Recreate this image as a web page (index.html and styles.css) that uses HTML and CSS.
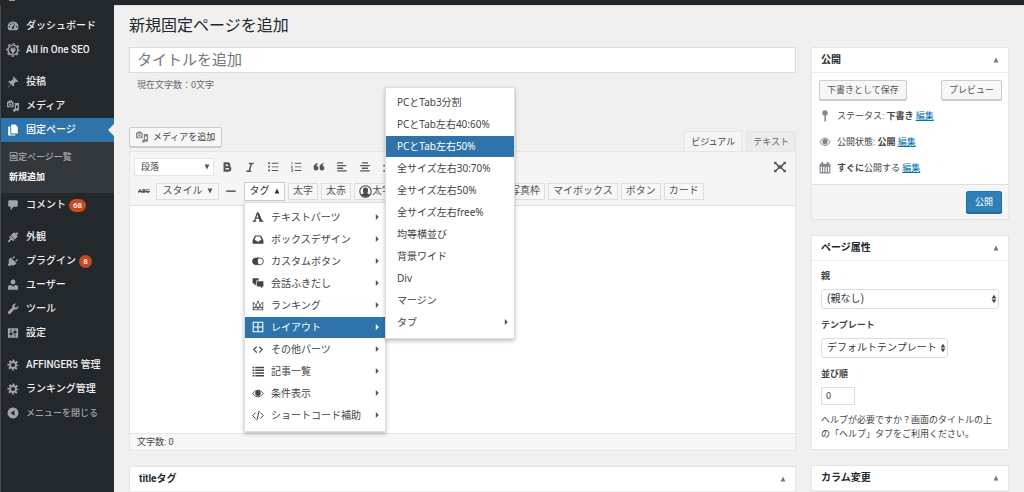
FILE: index.html
```html
<!DOCTYPE html>
<html lang="ja">
<head>
<meta charset="utf-8">
<title>新規固定ページを追加</title>
<link rel="stylesheet" href="styles.css">
</head>
<body>
<svg class="sprite" aria-hidden="true">
  <symbol id="gear" viewBox="0 0 20 20"><g fill="none" stroke="currentColor"><circle cx="10" cy="10" r="5" stroke-width="3"/><circle cx="10" cy="10" r="7.8" stroke-width="3" stroke-dasharray="3.1 3.03" stroke-dashoffset="1.5"/></g></symbol>
  <symbol id="media" viewBox="0 0 20 20"><path fill="currentColor" fill-rule="evenodd" d="M0 3h2l1-2h5l1 2h2v9H0zM5.500 4a3.500 3.500 0 1 0 .01 0zM5.500 5.500a2 2 0 1 1-.01 0zM13 5h7v11a2.500 2.500 0 1 1-2-2.500V9h-3v8a2.500 2.500 0 1 1-2-2.500z"/></symbol>
  <symbol id="up" viewBox="0 0 10 10"><path fill="currentColor" d="M5 1l4 8H1z"/></symbol>
  <symbol id="down" viewBox="0 0 10 10"><path fill="currentColor" d="M1 1h8L5 9z"/></symbol>
  <symbol id="right" viewBox="0 0 10 10"><path fill="currentColor" d="M3 0l5 5-5 5z"/></symbol>
  <symbol id="updown" viewBox="0 0 10 16"><path fill="currentColor" d="M5 1l4 6H1zM1 9h8l-4 6z"/></symbol>
</svg>
<header class="adminbar"><span class="logo-edge"></span></header>
<div class="shell">
  <nav class="sidebar">
    <ul class="menu">
      <li><a href="#"><svg viewBox="0 0 20 20"><path fill="currentColor" fill-rule="evenodd" d="M3 17A9 9 0 1 1 17 17zM9 4v2h2V4zM5 6v2h2V6zM3 10v2h2v-2zM15 10v2h2v-2zM14 5l-5 6.500a1.800 1.800 0 1 0 2.500 1z"/></svg>ダッシュボード</a></li>
      <li><a href="#"><svg class="large" viewBox="0 0 20 20"><g fill="none" stroke="currentColor"><circle cx="10" cy="10" r="7" stroke-width="2"/><circle cx="10" cy="10" r="8.800" stroke-width="2" stroke-dasharray="3.500 3.410" stroke-dashoffset="1.700"/></g><path fill="currentColor" d="M7.500 6h1.500v2h2V6h1.500v2h1v3l-2 2v2h-3v-2l-2-2V8h1z"/></svg>All in One SEO</a></li>
      <li class="group"><a href="#"><svg viewBox="0 0 20 20"><path fill="currentColor" d="M11 1l8 8-2 1-2-.5-3.500 3.500.5 3-1.500 1.500-4-4L2 19l-1 .5.5-1L6 13 2 9.500 3.500 8l3 .5L10.500 5 10 3z"/></svg>投稿</a></li>
      <li><a href="#"><svg><use href="#media"/></svg>メディア</a></li>
      <li class="current"><a href="#"><svg viewBox="0 0 20 20"><path fill="currentColor" d="M7 1h7l4 4v11H7zM2 4h3.500v13.500H14V19H2z"/></svg>固定ページ</a>
        <ul class="submenu"><li><a href="#">固定ページ一覧</a></li><li><a class="on" href="#">新規追加</a></li></ul>
      </li>
      <li><a href="#"><svg viewBox="0 0 20 20"><path fill="currentColor" d="M4 2h12q2 0 2 2v7q0 2-2 2h-5l-5 6v-6H4q-2 0-2-2V4q0-2 2-2z"/></svg>コメント<span class="count">68</span></a></li>
      <li class="group"><a href="#"><svg viewBox="0 0 20 20"><path fill="currentColor" d="M12 2l2 2 3-2 2 2-3 3 2 2-5 5-7-7zM5.500 8l7 7-2 1.500-3-2L3 19l-2-2 4.500-4.500-2-2.500z"/></svg>外観</a></li>
      <li><a href="#"><svg viewBox="0 0 20 20"><path fill="currentColor" d="M4 6l2-2 10 10-2 2q-4 2.500-7.500.5L4 19l-3-3 2.500-2.500Q1.500 10 4 6zM8.500 5L12 1.500l1.500 1.500L10 6.500zM13.500 10L17 6.500 18.500 8 15 11.500z"/></svg>プラグイン<span class="count">8</span></a></li>
      <li><a href="#"><svg viewBox="0 0 20 20"><circle cx="10" cy="5" r="4" fill="currentColor"/><path fill="currentColor" d="M1.500 18v-4q0-4 5-4L10 13l3.500-3q5 0 5 4v4z"/></svg>ユーザー</a></li>
      <li><a href="#"><svg viewBox="0 0 20 20"><path fill="currentColor" d="M15.500 1l-3 3 .5 3 3 .5 3-3q.5 3-1.500 5t-5 1L6 17.500q-1.500 1.500-3.500.5-2-2-.5-4L9 7.500q-1-3 1-5t5.500-1.500z"/></svg>ツール</a></li>
      <li><a href="#"><svg viewBox="0 0 20 20"><path fill="currentColor" fill-rule="evenodd" d="M1.500 2h17v16h-17zM6 4v6H4v3h2v3h1.500v-3h2v-3h-2V4zM12.500 4v3h-2v3h2v6H14v-6h2V7h-2V4z"/></svg>設定</a></li>
      <li class="group"><a href="#"><svg><use href="#gear"/></svg>AFFINGER5 管理</a></li>
      <li><a href="#"><svg><use href="#gear"/></svg>ランキング管理</a></li>
      <li><button class="collapse" type="button"><svg viewBox="0 0 20 20"><path fill="currentColor" fill-rule="evenodd" d="M10 1a9 9 0 1 0 .01 0zM12.500 5.500v9L6 10z"/></svg>メニューを閉じる</button></li>
    </ul>
  </nav>
  <main class="content">
    <h1>新規固定ページを追加</h1>
    <div class="columns">
      <div class="primary">
        <input class="title" type="text" placeholder="タイトルを追加" aria-label="タイトルを追加">
        <p class="letters">現在文字数：0文字</p>
        <div class="tools">
          <button class="button media" type="button"><svg><use href="#media"/></svg>メディアを追加</button>
          <div class="tabs"><button class="tab active" type="button">ビジュアル</button><button class="tab" type="button">テキスト</button></div>
        </div>
        <section class="editor">
          <div class="toolbar">
            <div class="bar">
              <span class="pick format"><select aria-label="書式"><option>段落</option></select><svg><use href="#down"/></svg></span>
              <div class="icons">
                <button type="button" aria-label="B"><svg viewBox="0 0 20 20"><path fill="none" stroke="currentColor" stroke-width="3.500" d="M6 4h5q3 0 3 3t-3 3H6zm0 6h6q3.500 0 3.500 3T12 16H6z"/></svg></button>
                <button type="button" aria-label="I"><svg viewBox="0 0 20 20"><path fill="none" stroke="currentColor" stroke-width="2.500" d="M8 4h8M4 17h8M12.500 4l-4 13"/></svg></button>
                <button type="button" aria-label="ul"><svg viewBox="0 0 20 20"><path fill="currentColor" d="M2 2h3v3H2zm0 6h3v3H2zm0 6h3v3H2zM8 3h11v1.500H8zm0 6h11v1.500H8zm0 6h11v1.500H8z"/></svg></button>
                <button type="button" aria-label="ol"><svg viewBox="0 0 20 20"><path fill="currentColor" d="M8 3h11v1.500H8zm0 6h11v1.500H8zm0 6h11v1.500H8z"/><path fill="none" stroke="currentColor" d="M2 2.500h1.500V6M2 8.500h2.500l-2.500 3h3M2 13.500h2.500v4H2m0-2h2.500"/></svg></button>
                <button type="button" aria-label="quote"><svg viewBox="0 0 20 20"><path fill="currentColor" d="M9.500 3Q6 4.500 6 8a4 4 0 1 1-5 4Q0 4.500 9.500 3zM19.500 3Q16 4.500 16 8a4 4 0 1 1-5 4Q10 4.500 19.500 3z"/></svg></button>
                <button type="button" aria-label="left"><svg viewBox="0 0 20 20"><path fill="currentColor" d="M2 2h10v2.200H2zm0 4.500h15v2.200H2zM2 11h10v2.200H2zm0 4.500h16v2.200H2z"/></svg></button>
                <button type="button" aria-label="center"><svg viewBox="0 0 20 20"><path fill="currentColor" d="M5 2h10v2.200H5zM2 6.500h16v2.200H2zM5 11h10v2.200H5zm-3 4.500h16v2.200H2z"/></svg></button>
                <button type="button" aria-label="right"><svg viewBox="0 0 20 20"><path fill="currentColor" d="M8 2h10v2.200H8zM2 6.500h16v2.200H2zM8 11h10v2.200H8zm-6 4.500h16v2.200H2z"/></svg></button>
              </div>
              <button class="full" type="button" aria-label="full"><svg viewBox="0 0 24 20"><path fill="currentColor" d="M2 1h5L5.500 2.500 10 7h4l4.500-4.500L17 1h5v5l-1.500-1.500L16 8.500v3l4.500 4L22 14v5h-5l1.500-1.500L14 13h-4l-4.500 4.500L7 19H2v-5l1.500 1.500 4.500-4v-3l-4.500-4L2 6z"/></svg></button>
            </div>
            <div class="bar second">
              <button class="strike" type="button"><s>ABC</s></button>
              <button class="tool style" type="button">スタイル<svg><use href="#down"/></svg></button>
              <button class="rule" type="button" aria-label="hr"><svg viewBox="0 0 20 20"><path fill="currentColor" d="M2 9h16v2.500H2z"/></svg></button>
              <div class="dropdown">
                <button class="tool open" type="button">タグ<svg><use href="#up"/></svg></button>
                <ul class="popup tags">
                  <li><button type="button"><svg viewBox="0 0 20 20"><path fill="none" stroke="currentColor" stroke-width="2" d="M1 17h6m5 0h7M4 17L9 3h1l6 14M6 12h8"/><path fill="none" stroke="currentColor" stroke-width="3.500" d="M10 4l5 13"/></svg>テキストパーツ<svg class="arrow"><use href="#right"/></svg></button></li>
                  <li><button type="button"><svg viewBox="0 0 20 20"><path fill="currentColor" fill-rule="evenodd" d="M5 4h10l4 8v6H1v-6zM6.500 6L4 12h3l1 2h4l1-2h3l-2.500-6z"/></svg>ボックスデザイン<svg class="arrow"><use href="#right"/></svg></button></li>
                  <li><button type="button"><svg viewBox="0 0 20 20"><rect x="1" y="5" width="18" height="11" rx="5.500" fill="none" stroke="currentColor" stroke-width="1.500"/><path fill="currentColor" d="M6.500 5H11q-2.500 5 0 11H6.500a5.500 5.500 0 0 1 0-11z"/></svg>カスタムボタン<svg class="arrow"><use href="#right"/></svg></button></li>
                  <li><button type="button"><svg viewBox="0 0 20 20"><path fill="currentColor" d="M1 2h10v4H7v6l-3 2v-3H1zM8 7h11v9h-2v3l-3-3H8z"/></svg>会話ふきだし<svg class="arrow"><use href="#right"/></svg></button></li>
                  <li><button type="button"><svg viewBox="0 0 20 20"><path fill="none" stroke="currentColor" stroke-width="1.300" d="M2 18V5l5 6 3-8 3 8 5-6v13zM2 18l5-7 3 6 3-6 5 7M2 14h16"/></svg>ランキング<svg class="arrow"><use href="#right"/></svg></button></li>
                  <li class="selected"><button type="button"><svg viewBox="0 0 20 20"><path fill="none" stroke="currentColor" stroke-width="1.800" d="M2 2h16v16H2zM10 2v16M2 10h16"/></svg>レイアウト<svg class="arrow"><use href="#right"/></svg></button>
                    <ul class="popup layouts">
                      <li><button type="button">PCとTab3分割</button></li>
                      <li><button type="button">PCとTab左右40:60%</button></li>
                      <li class="selected"><button type="button">PCとTab左右50%</button></li>
                      <li><button type="button">全サイズ左右30:70%</button></li>
                      <li><button type="button">全サイズ左右50%</button></li>
                      <li><button type="button">全サイズ左右free%</button></li>
                      <li><button type="button">均等横並び</button></li>
                      <li><button type="button">背景ワイド</button></li>
                      <li><button type="button">Div</button></li>
                      <li><button type="button">マージン</button></li>
                      <li><button type="button">タブ<svg class="arrow"><use href="#right"/></svg></button></li>
                    </ul>
                  </li>
                  <li><button type="button"><svg viewBox="0 0 20 20"><path fill="none" stroke="currentColor" stroke-width="2" d="M8 6l-5 5 5 5m4-10l5 5-5 5"/></svg>その他パーツ<svg class="arrow"><use href="#right"/></svg></button></li>
                  <li><button type="button"><svg viewBox="0 0 20 20"><path fill="currentColor" d="M1 3h3v2.500H1zm0 4.500h3V10H1zM1 12h3v2.500H1zm0 4.500h3V19H1zM5.500 3H20v2.500H5.500zm0 4.500H20V10H5.500zm0 4.500H20v2.500H5.500zm0 4.500H20V19H5.500z"/></svg>記事一覧<svg class="arrow"><use href="#right"/></svg></button></li>
                  <li><button type="button"><svg viewBox="0 0 20 20"><path fill="none" stroke="currentColor" stroke-width="1.500" d="M1 11q9-12 18 0-9 11-18 0z"/><circle cx="10" cy="10.500" r="4.500" fill="currentColor"/></svg>条件表示<svg class="arrow"><use href="#right"/></svg></button></li>
                  <li><button type="button"><svg viewBox="0 0 20 20"><path fill="none" stroke="currentColor" stroke-width="1.600" d="M6 6l-5 5 5 5m8-10l5 5-5 5M12 3L8 19"/></svg>ショートコード補助<svg class="arrow"><use href="#right"/></svg></button></li>
                </ul>
              </div>
              <button class="tool" type="button">太字</button>
              <button class="tool" type="button">太赤</button>
              <button class="tool face" type="button"><svg viewBox="0 0 20 20"><circle cx="10" cy="10" r="8.800" fill="none" stroke="currentColor" stroke-width="1.700"/><path fill="currentColor" d="M10 4q4 0 4 4 0 3-1.500 4.500l4.500 2q-7 8-14 0l4.500-2Q6 11 6 8q0-4 4-4z"/></svg>太字</button>
              <div class="extras">
                <button class="tool" type="button">写真枠</button>
                <button class="tool" type="button">マイボックス</button>
                <button class="tool" type="button">ボタン</button>
                <button class="tool" type="button">カード</button>
              </div>
            </div>
          </div>
          <div class="canvas" contenteditable="true" role="textbox" aria-label="本文"></div>
          <div class="status">文字数: 0</div>
        </section>
        <section class="box"><h2>titleタグ<svg><use href="#up"/></svg></h2></section>
      </div>
      <aside class="secondary">
        <section class="box">
          <h2>公開<svg><use href="#up"/></svg></h2>
          <div class="publish">
            <div class="actions"><button class="button" type="button">下書きとして保存</button><button class="button" type="button">プレビュー</button></div>
            <p><svg viewBox="0 0 20 20"><circle cx="10" cy="5" r="4.500" fill="currentColor"/><path fill="currentColor" d="M9 9h2.500v9L10 20l-1-2z"/></svg><span>ステータス: <b>下書き</b> <a href="#">編集</a></span></p>
            <p><svg viewBox="0 0 20 20"><path fill="none" stroke="currentColor" stroke-width="1.600" d="M1 10q9-13 18 0-9 12-18 0z"/><circle cx="10" cy="9.500" r="4.500" fill="currentColor"/></svg><span>公開状態: <b>公開</b> <a href="#">編集</a></span></p>
            <p><svg viewBox="0 0 20 20"><path fill="currentColor" fill-rule="evenodd" d="M1 3h3V0h3v3h6V0h3v3h3v16H1zM3 8v9h2V8zM7 8v9h2V8zM11 8v9h2V8zM15 8v9h2V8z"/></svg><span><b>すぐに</b>公開する <a href="#">編集</a></span></p>
          </div>
          <div class="major"><button class="primary-button" type="button">公開</button></div>
        </section>
        <section class="box">
          <h2>ページ属性<svg><use href="#up"/></svg></h2>
          <div class="attributes">
            <label for="parent">親</label>
            <span class="pick wide"><select id="parent"><option>(親なし)</option></select><svg><use href="#updown"/></svg></span>
            <label for="template">テンプレート</label>
            <span class="pick"><select id="template"><option>デフォルトテンプレート</option></select><svg><use href="#updown"/></svg></span>
            <label for="order">並び順</label>
            <input id="order" type="text" value="0">
            <p>ヘルプが必要ですか？画面のタイトルの上の「ヘルプ」タブをご利用ください。</p>
          </div>
        </section>
        <section class="box"><h2>カラム変更<svg><use href="#up"/></svg></h2></section>
      </aside>
    </div>
  </main>
</div>
</body>
</html>
```
FILE: styles.css
```css
* { box-sizing: border-box; }
body {
  margin: 0;
  height: 100vh;
  overflow: hidden;
  display: flex;
  flex-direction: column;
  background: #f0f0f0;
  color: #444;
  font: 9px/14px Roboto, "Noto Sans CJK JP", sans-serif;
}
ul { list-style: none; margin: 0; padding: 0; }
h1, h2, p { margin: 0; }
button, input, select { font: inherit; color: inherit; margin: 0; }
button { background: none; border: 0; padding: 0; white-space: nowrap; }
svg { flex: none; width: 12px; height: 12px; }
a { color: #0073aa; }
.sprite { position: absolute; width: 0; height: 0; }

.adminbar { height: 5px; flex: none; background: #23282d; padding-left: 9px; }
.logo-edge { display: block; width: 6px; height: 1px; background: #999; }
.shell { flex: 1; display: flex; min-height: 0; }

.sidebar {
  width: 114px;
  flex: none;
  padding-top: 9px;
  background: #23282d;
  border-left: 1px solid #464b50;
  font-size: 10px;
  font-weight: 500;
}
.menu > li > a, .collapse {
  position: relative;
  display: flex;
  align-items: center;
  gap: 7px;
  width: 100%;
  height: 24px;
  padding-left: 6px;
  color: #eee;
  text-decoration: none;
}
.sidebar svg { color: #a0a5aa; }
.sidebar .large { width: 14px; height: 14px; margin: 0 -1px; }
.menu > .group { margin-top: 8px; }
.menu > .current > a { background: #2e74aa; color: #fff; }
.menu > .current svg { color: #fff; }
.current > a::after {
  content: "";
  position: absolute;
  right: 0;
  top: 6px;
  border: 6px solid transparent;
  border-right-color: #f0f0f0;
  border-left: 0;
}
.submenu { background: #32373c; padding: 5px 8px 6px; font-size: 9px; }
.submenu a { display: block; line-height: 20px; color: #a5aaaf; text-decoration: none; }
.submenu .on { color: #fff; font-weight: 700; }
.count {
  margin-left: -4px;
  min-width: 13px;
  padding: 0 4px;
  border-radius: 7px;
  background: #ca4a1f;
  color: #fff;
  font-size: 8px;
  line-height: 13px;
  text-align: center;
}
.collapse { color: #a0a5aa; font-size: 9px; }

.content { flex: 1; min-width: 0; padding: 8px 15px 0; border-top: 1px solid #ddd; }
h1 { font-size: 16px; line-height: 23px; font-weight: 400; color: #23282d; margin-bottom: 10px; }
.columns { display: flex; gap: 15px; }
.primary { flex: 1; min-width: 0; }
.secondary { width: 198px; flex: none; display: flex; flex-direction: column; gap: 15px; }

.title {
  display: block;
  width: 100%;
  height: 26px;
  padding: 0 7px;
  border: 1px solid #ddd;
  background: #fff;
  font-size: 15px;
}
.title::placeholder { color: #72777c; }
.letters { padding: 5px 8px 0; color: #666; }
.tools { display: flex; align-items: flex-end; justify-content: space-between; padding-top: 35px; }
.button {
  display: flex;
  align-items: center;
  height: 20px;
  padding: 0 7px;
  border: 1px solid #ccc;
  border-radius: 2px;
  background: #f7f7f7;
  box-shadow: 0 1px 0 #ccc;
  color: #555;
}
.media { gap: 5px; padding: 0 6px; margin-bottom: 4px; color: #444; }
.media svg { color: #82878c; }
.tabs { display: flex; gap: 4px; }
.tab {
  height: 20px;
  padding: 0 6px;
  border: 1px solid #e5e5e5;
  border-bottom: 0;
  background: #ebebeb;
  color: #666;
}
.tab.active { position: relative; margin-bottom: -1px; background: #f5f5f5; color: #444; }

.editor { border: 1px solid #e5e5e5; background: #fff; }
.toolbar { padding: 5px 4px 4px; background: #f5f5f5; border-bottom: 1px solid #ddd; }
.bar { display: flex; align-items: center; height: 19px; color: #50575e; }
.bar + .bar { margin-top: 5px; height: 20px; }
.pick { position: relative; display: inline-flex; }
.pick select { appearance: none; border: 1px solid #ddd; background: #fff; color: #32373c; }
.pick svg { position: absolute; pointer-events: none; }
.format { width: 80px; }
.format select { width: 100%; height: 18px; padding: 0 6px; border-color: #e5e5e5; color: #444; }
.format svg { right: 4px; top: 6px; width: 6px; height: 6px; }
.icons { display: flex; gap: 11px; margin-left: 7px; }
.bar button { display: flex; align-items: center; }
.full { margin-left: auto; margin-right: 4px; }
.full svg { width: 14px; height: 12px; }
.second { gap: 3px; }
.strike { width: 19px; padding-left: 4px; font-size: 6px; font-weight: 700; }
.bar .tool {
  justify-content: center;
  height: 17px;
  padding: 0 4px;
  border: 1px solid #ddd;
  background: #f7f7f7;
  color: #555;
  font-size: 10px;
}
.bar .style { width: 63px; gap: 4px; }
.style svg, .open svg { width: 6px; height: 6px; }
.rule { width: 19px; padding-left: 3px; }
.bar .open { width: 41px; height: 19px; gap: 4px; background: #fff; border-color: #ccc; color: #333; }
.dropdown { position: relative; }
.face svg { width: 13px; height: 13px; color: #444b52; }
.extras { display: flex; gap: 3px; margin-left: 105px; }

.popup {
  position: absolute;
  z-index: 2;
  padding: 4px 0;
  border: 1px solid #ddd;
  background: #fff;
  box-shadow: 0 2px 4px rgba(0, 0, 0, .25);
  color: #444;
}
.tags { left: 0; top: 20px; width: 142px; }
.layouts { left: 140px; bottom: 0; width: 130px; }
.popup li { height: 22px; position: relative; }
.popup button {
  width: 100%;
  height: 21px;
  gap: 7px;
  padding: 0 5px 0 7px;
  font: 10px/21px "Noto Sans", "Noto Sans CJK JP", sans-serif;
}
.popup .layouts button { padding-left: 11px; }
.popup .arrow { width: 6px; height: 6px; margin-left: auto; color: #555; }
.popup .selected > button { background: #2e74aa; color: #fff; }
.popup .selected > button .arrow { color: #fff; }

.canvas { min-height: 227px; }
.status { padding: 0 7px; line-height: 16px; border-top: 1px solid #e5e5e5; background: #f7f7f7; }
.box { border: 1px solid #e5e5e5; background: #fff; }
.primary .box { margin-top: 15px; }
h2 {
  display: flex;
  align-items: center;
  justify-content: space-between;
  height: 25px;
  padding: 0 9px;
  border-bottom: 1px solid #eee;
  color: #23282d;
  font-size: 10px;
  font-weight: 700;
}
h2 svg { width: 6px; height: 6px; color: #72777c; }
.publish { padding: 7px 6px 3px 7px; }
.actions { display: flex; justify-content: space-between; margin-bottom: 3px; }
.publish p { display: flex; align-items: center; gap: 6px; height: 26px; }
.publish p svg { color: #82878c; }
.major { display: flex; justify-content: flex-end; padding: 6px; border-top: 1px solid #ddd; background: #f5f5f5; }
.primary-button {
  height: 22px;
  padding: 0 8px;
  border: 1px solid #1f72a5;
  border-radius: 2px;
  background: #2f80b4;
  box-shadow: 0 1px 0 #1f6a99;
  color: #fff;
}
.attributes { display: flex; flex-direction: column; align-items: flex-start; padding: 8px 9px; }
.attributes label { font-weight: 700; margin-bottom: 6px; }
.attributes .pick { margin-bottom: 9px; }
.attributes select { height: 20px; width: 100%; padding: 0 10px 0 5px; border-radius: 3px; font-size: 10px; }
.attributes .wide { width: 100%; }
.attributes .pick svg { right: 2px; top: 5px; width: 6px; height: 10px; }
#order { width: 34px; height: 18px; padding: 0 4px; border: 1px solid #ddd; }
.attributes p { margin-top: 8px; }
```
